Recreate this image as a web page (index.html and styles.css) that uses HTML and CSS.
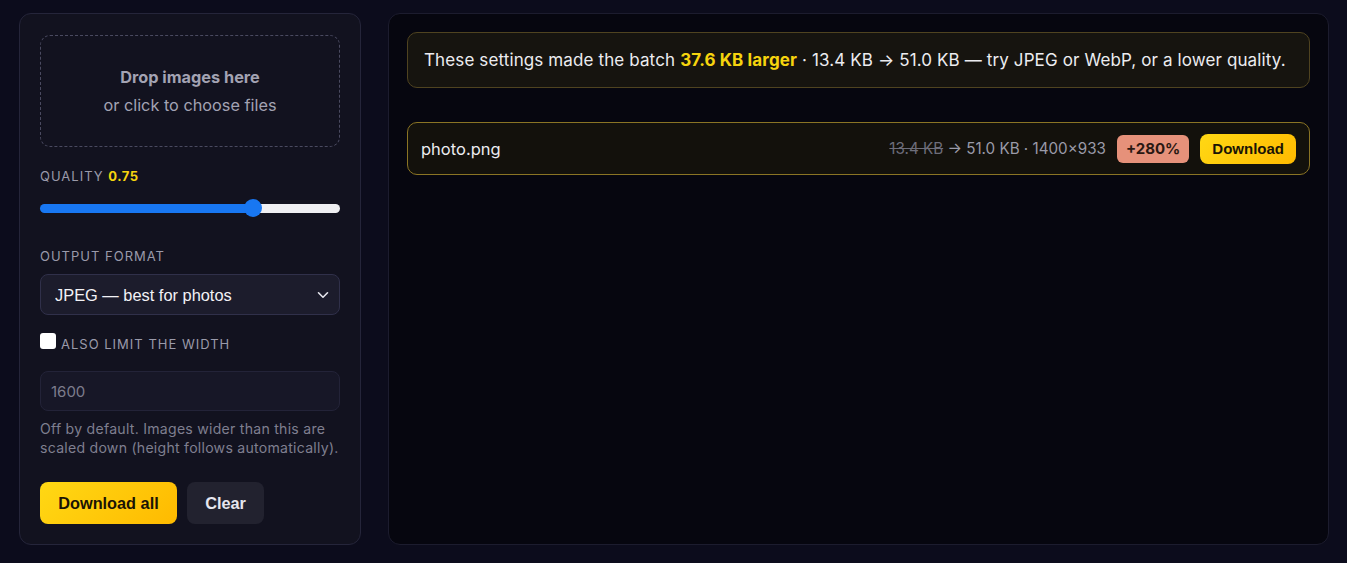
FILE: index.html
```html
<!DOCTYPE html>
<html lang="en">
<head>
<meta charset="utf-8">
<title>Image compressor</title>
<link rel="stylesheet" href="styles.css">
</head>
<body>
<main class="app">
  <aside class="side">
    <div class="drop">
      <div class="drop-title">Drop images here</div>
      <div class="drop-sub">or click to choose files</div>
    </div>
    <label class="lbl lbl-quality">Quality <span class="qval">0.75</span></label>
    <input class="range" type="range" min="0.1" max="1" step="0.05" value="0.75" style="--fill:72.2%">
    <label class="lbl lbl-format">Output format</label>
    <div class="select-wrap">
      <select class="select">
        <option>JPEG — best for photos</option>
      </select>
      <svg class="chev" width="12" height="8" viewBox="0 0 12 8"><path d="M1.5 1.8 L6 6.2 L10.5 1.8" fill="none" stroke="#e6e6ee" stroke-width="1.6" stroke-linecap="round" stroke-linejoin="round"/></svg>
    </div>
    <label class="check-row"><input type="checkbox" class="check"><span class="lbl">Also limit the width</span></label>
    <input class="num" type="text" placeholder="1600">
    <p class="help">Off by default. Images wider than this are scaled down (height follows automatically).</p>
    <div class="actions">
      <button class="btn btn-primary">Download all</button>
      <button class="btn btn-ghost">Clear</button>
    </div>
  </aside>
  <section class="results">
    <div class="banner">These settings made the batch <strong class="hl">37.6 KB larger</strong> · 13.4 KB → 51.0 KB — try JPEG or WebP, or a lower quality.</div>
    <div class="row">
      <span class="fname">photo.png</span>
      <span class="meta"><s class="old">13.4 KB</s> → 51.0 KB · 1400×933</span>
      <span class="badge">+280%</span>
      <button class="btn-sm">Download</button>
    </div>
  </section>
</main>
</body>
</html>
```

FILE: styles.css
```css
* { box-sizing: border-box; }
html, body { margin: 0; height: 100%; }
body {
  background: #0c0c1c;
  font-family: Inter, "Noto Sans", sans-serif;
  color: #e8e8ee;
}
.app {
  display: grid;
  grid-template-columns: 342px 1fr;
  gap: 27px;
  padding: 13px 18px 18px 19px;
  align-items: stretch;
}
.side {
  background: #12121f;
  border: 1px solid #25253a;
  border-radius: 12px;
  padding: 20px;
  display: flex;
  flex-direction: column;
}
.drop {
  height: 112px;
  border: 1.5px dashed #4a4a60;
  border-radius: 10px;
  display: flex;
  flex-direction: column;
  align-items: center;
  justify-content: center;
  gap: 8px;
  color: #a3a3b3;
  font-size: 16.3px;
  margin-top: 1px;
}
.drop-title { font-weight: 700; }
.lbl {
  font-size: 13px;
  line-height: 16px;
  letter-spacing: 1px;
  text-transform: uppercase;
  color: #9a9aaa;
}
.lbl-quality { margin-top: 21px; }
.qval { color: #f6d40e; font-weight: 700; letter-spacing: 0.5px; }
.range {
  -webkit-appearance: none;
  appearance: none;
  width: 100%;
  height: 18px;
  margin: 15px 0 0;
  background: transparent;
}
.range::-webkit-slider-runnable-track {
  height: 9px;
  border-radius: 5px;
  background: linear-gradient(to right, #1877f2 var(--fill), #efeff2 var(--fill));
}
.range::-webkit-slider-thumb {
  -webkit-appearance: none;
  width: 18px;
  height: 18px;
  border-radius: 50%;
  background: #1877f2;
  margin-top: -4.5px;
}
.lbl-format { margin-top: 31px; }
.select-wrap { position: relative; margin-top: 10px; }
.select {
  -webkit-appearance: none;
  appearance: none;
  width: 100%;
  height: 41px;
  background: #1c1c2c;
  border: 1px solid #30304a;
  border-radius: 8px;
  color: #f2f2f6;
  font-family: "Liberation Sans", Arial, sans-serif;
  font-size: 16.4px;
  padding: 0 14px;
}
.chev { position: absolute; right: 11px; top: 17px; }
.check-row {
  display: flex;
  align-items: center;
  gap: 5px;
  margin-top: 18px;
  height: 20px;
}
.check {
  -webkit-appearance: none;
  appearance: none;
  width: 16px;
  height: 16px;
  margin: 0;
  background: #fff;
  border-radius: 3px;
  position: relative;
  top: -2px;
}
.check-row .lbl { position: relative; top: 1px; }
.num {
  margin-top: 18px;
  height: 40px;
  width: 100%;
  background: #171727;
  border: 1px solid #232338;
  border-radius: 8px;
  color: #e8e8ee;
  font-family: Inter, sans-serif;
  font-size: 15px;
  padding: 0 10px;
}
.num::placeholder { color: #7d7d8d; }
.help {
  margin: 8px 0 0;
  font-size: 14.1px;
  line-height: 19px;
  letter-spacing: 0.25px;
  color: #7f7f8f;
}
.actions { display: flex; gap: 10px; margin-top: 25px; }
.btn {
  height: 42px;
  border: 0;
  border-radius: 8px;
  font-family: "Liberation Sans", Arial, sans-serif;
  font-weight: 700;
  font-size: 16.3px;
  padding: 0 18px;
}
.btn-primary {
  background: linear-gradient(135deg, #ffd814, #ffba00);
  color: #1a1405;
  width: 137px;
}
.btn-ghost { background: #22222f; color: #e6e6ee; width: 77px; }
.results {
  background: #06060f;
  border: 1px solid #1c1c2e;
  border-radius: 12px;
  padding: 18px 18px;
}
.banner {
  height: 56px;
  display: flex;
  align-items: center;
  padding: 0 16px;
  background: #16140f;
  border: 1px solid #4f4320;
  border-radius: 10px;
  font-size: 17px;
  letter-spacing: 0.12px;
  color: #ececf0;
}
.banner .hl { color: #f6d40e; margin: 0 5px; }
.row {
  margin-top: 34px;
  height: 53px;
  display: flex;
  align-items: center;
  padding: 0 13px 0 13px;
  background: #13110c;
  border: 1.5px solid #8a7424;
  border-radius: 10px;
}
.fname { font-size: 16.5px; color: #ececf0; flex: 1; }
.meta { font-size: 15.2px; color: #9a9aa8; }
.old { color: #6d6d7a; }
.badge {
  margin-left: 11px;
  height: 28px;
  display: flex;
  align-items: center;
  padding: 0 9px;
  border-radius: 6px;
  background: #e6917a;
  color: #2a1812;
  font-weight: 700;
  font-size: 15px;
}
.btn-sm {
  margin-left: 11px;
  height: 30px;
  padding: 0 12px;
  border: 0;
  border-radius: 8px;
  background: linear-gradient(135deg, #ffd814, #ffba00);
  color: #1a1405;
  font-family: "Liberation Sans", Arial, sans-serif;
  font-weight: 700;
  font-size: 15px;
}
```
